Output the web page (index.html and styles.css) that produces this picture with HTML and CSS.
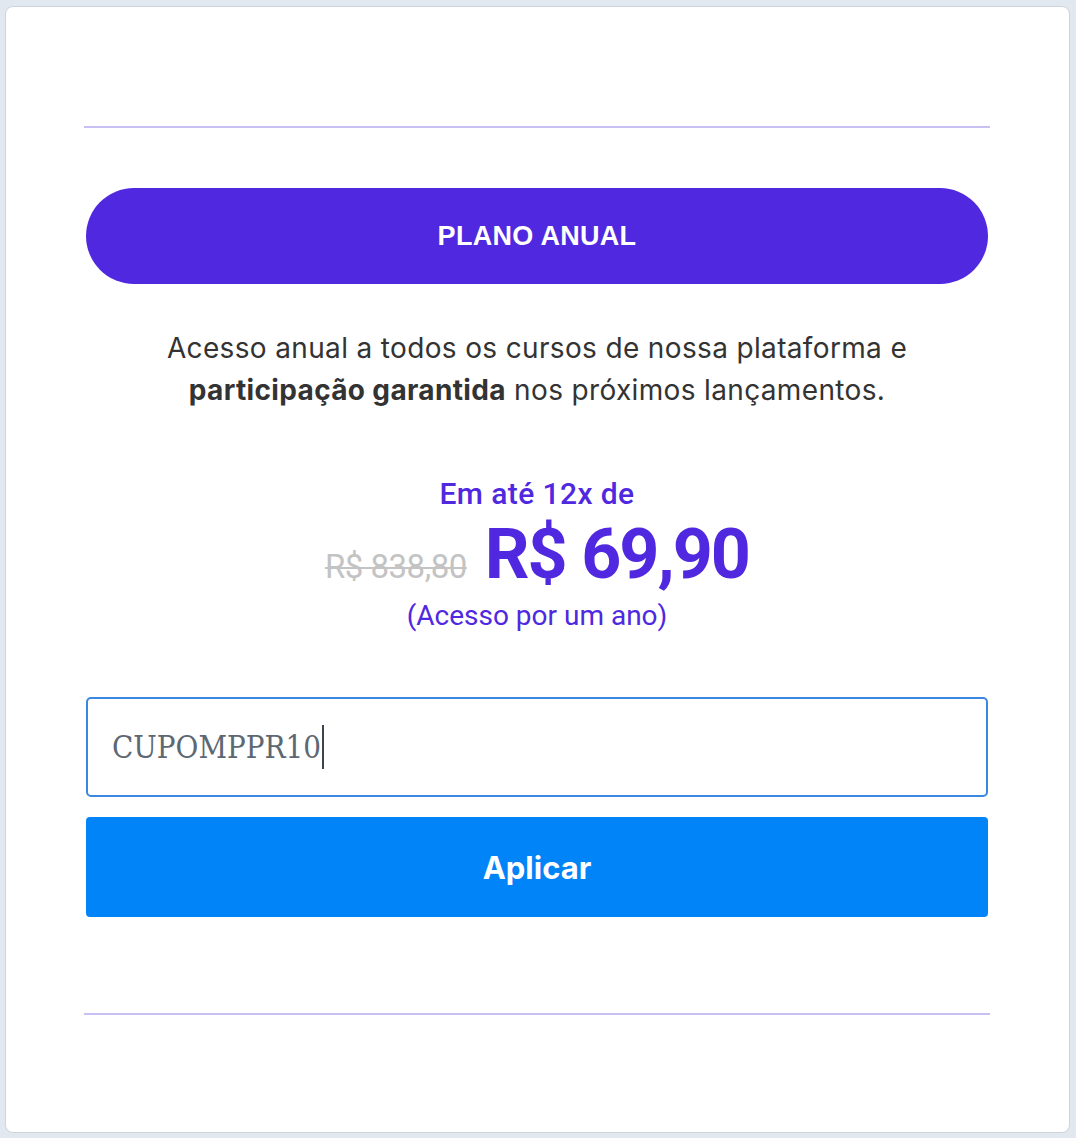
FILE: index.html
```html
<!DOCTYPE html>
<html lang="pt-BR">
    <head>
        <meta charset="UTF-8" />
        <meta name="viewport" content="width=device-width, initial-scale=1.0" />
        <title>Plano Anual</title>
        <link rel="stylesheet" href="styles.css">
    </head>

    <body>
        <section class="card">
            <hr class="divider" />

            <div class="plan">PLANO ANUAL</div>

            <p class="desc">
                Acesso anual a todos os cursos de nossa plataforma e<br />
                <strong>participação garantida</strong> nos próximos lançamentos.
            </p>

            <div class="price">
                <div class="installments">Em até 12x de</div>
                <div class="values">
                    <span class="old">R$ 838,80</span>
                    <span class="now">R$ 69,90</span>
                </div>
                <div class="period">(Acesso por um ano)</div>
            </div>

            <form class="coupon">
                <div class="field">
                    <span class="code">CUPOMPPR10</span><span class="caret"></span>
                </div>
                <button type="button" class="apply">Aplicar</button>
            </form>

            <hr class="divider" />
        </section>
    </body>
</html>
```

FILE: styles.css
```css
* {
    margin: 0;
    padding: 0;
    box-sizing: border-box;
}

body {
    background: #e2e8ef;
    padding: 6px 6px 5px 5px;
    font-family: "Inter", "Noto Sans", sans-serif;
}

.card {
    display: flex;
    flex-direction: column;
    height: 1127px;
    padding: 119px 79px 0 78px;
    background: #fff;
    border: 1px solid #cfd4da;
    border-radius: 8px;
}

.divider {
    height: 2px;
    border: 0;
    background: #c9bff3;
}

.plan {
    margin: 60px 2px 0 2px;
    height: 96px;
    line-height: 96px;
    border-radius: 48px;
    background: #4f28df;
    color: #fff;
    text-align: center;
    font-family: "Liberation Sans", Arial, sans-serif;
    font-weight: bold;
    font-size: 27px;
    letter-spacing: 0.3px;
}

.desc {
    margin-top: 43px;
    text-align: center;
    color: #333;
    font-size: 28px;
    line-height: 42px;
    letter-spacing: 0.35px;
}

.desc strong {
    font-weight: 700;
}

.price {
    margin-top: 66px;
    display: flex;
    flex-direction: column;
    align-items: center;
    color: #4f28df;
    font-family: "Roboto", "Liberation Sans", sans-serif;
}

.installments {
    font-size: 30px;
    line-height: 34px;
    font-weight: 500;
    letter-spacing: 0.4px;
}

.values {
    display: flex;
    align-items: baseline;
    gap: 18px;
    height: 86px;
    line-height: 86px;
}

.values .old {
    color: #c3c3c3;
    font-size: 33px;
    letter-spacing: -0.5px;
    text-decoration: line-through;
    text-decoration-thickness: 2px;
}

.values .now {
    font-size: 70px;
    font-weight: 700;
    letter-spacing: -2px;
}

.period {
    margin-top: 2px;
    font-size: 28px;
    line-height: 34px;
}

.coupon {
    margin: 64px 2px 0 2px;
    display: flex;
    flex-direction: column;
    gap: 20px;
}

.field {
    display: flex;
    align-items: center;
    height: 100px;
    padding: 0 24px;
    border: 2px solid #3a88df;
    border-radius: 5px;
    color: #5d6873;
    font-family: "DejaVu Serif Condensed", "DejaVu Serif", serif;
    font-size: 31px;
}

.caret {
    width: 2px;
    height: 44px;
    margin-left: 1px;
    background: #3c4450;
}

.apply {
    height: 100px;
    border: 0;
    border-radius: 4px;
    background: #0084f8;
    color: #fff;
    font-family: "Inter", "Roboto", sans-serif;
    font-weight: 700;
    font-size: 31px;
    cursor: pointer;
}

.card > .divider:last-child {
    margin-top: 96px;
}
```
